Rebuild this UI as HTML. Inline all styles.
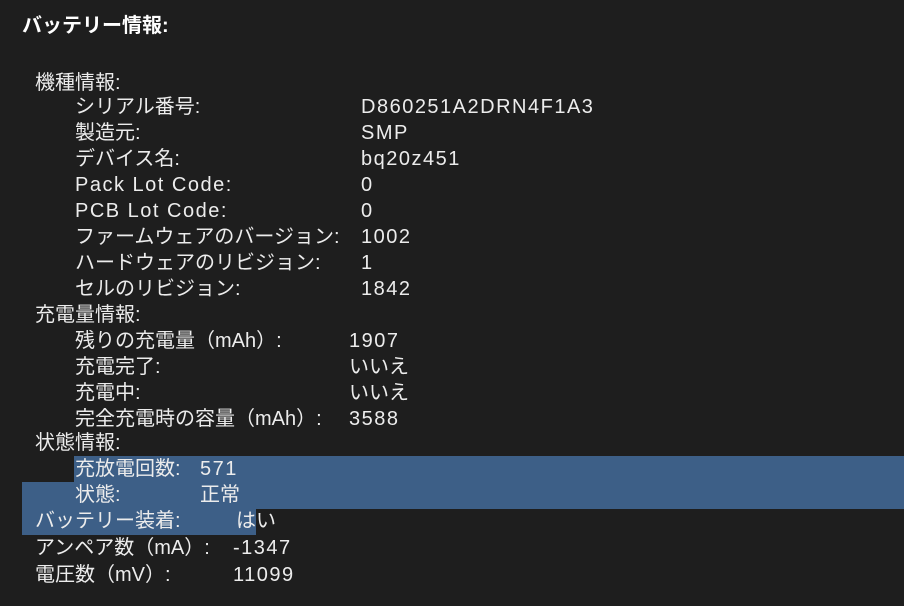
<!DOCTYPE html><html><head><meta charset="utf-8"><style>
body{margin:0;background:#1e1e1e;width:904px;height:606px;overflow:hidden;position:relative;font-family:"Liberation Sans","Noto Sans CJK JP",sans-serif;color:#ececec;font-size:20px}
.t{position:absolute;white-space:nowrap;line-height:26px}
.l{letter-spacing:1.5px}
.b{position:absolute;background:#3d5f87}
</style></head><body>
<div class="t" style="left:22px;top:13px;font-weight:bold;color:#fff">バッテリー情報:</div>
<div class="b" style="left:74px;top:456px;width:830px;height:27px"></div>
<div class="b" style="left:22px;top:482px;width:882px;height:27px"></div>
<div class="b" style="left:22px;top:508px;width:234px;height:27px"></div>
<div class="t" style="left:35px;top:70px">機種情報:</div>
<div class="t" style="left:75px;top:94px">シリアル番号:</div><div class="t l" style="left:361px;top:94px">D860251A2DRN4F1A3</div>
<div class="t" style="left:75px;top:120px">製造元:</div><div class="t l" style="left:361px;top:120px">SMP</div>
<div class="t" style="left:75px;top:146px">デバイス名:</div><div class="t l" style="left:361px;top:146px">bq20z451</div>
<div class="t l" style="left:75px;top:172px">Pack Lot Code:</div><div class="t l" style="left:361px;top:172px">0</div>
<div class="t l" style="left:75px;top:198px">PCB Lot Code:</div><div class="t l" style="left:361px;top:198px">0</div>
<div class="t" style="left:75px;top:224px">ファームウェアのバージョン:</div><div class="t l" style="left:361px;top:224px">1002</div>
<div class="t" style="left:75px;top:250px">ハードウェアのリビジョン:</div><div class="t l" style="left:361px;top:250px">1</div>
<div class="t" style="left:75px;top:276px">セルのリビジョン:</div><div class="t l" style="left:361px;top:276px">1842</div>
<div class="t" style="left:35px;top:302px">充電量情報:</div>
<div class="t" style="left:75px;top:328px">残りの充電量（mAh）:</div><div class="t l" style="left:349px;top:328px">1907</div>
<div class="t" style="left:75px;top:354px">充電完了:</div><div class="t" style="left:349px;top:354px">いいえ</div>
<div class="t" style="left:75px;top:380px">充電中:</div><div class="t" style="left:349px;top:380px">いいえ</div>
<div class="t" style="left:75px;top:406px">完全充電時の容量（mAh）:</div><div class="t l" style="left:349px;top:406px">3588</div>
<div class="t" style="left:35px;top:430px">状態情報:</div>
<div class="t" style="left:75px;top:456px">充放電回数:</div><div class="t l" style="left:200px;top:456px">571</div>
<div class="t" style="left:75px;top:482px">状態:</div><div class="t" style="left:200px;top:482px">正常</div>
<div class="t" style="left:35px;top:508px">バッテリー装着:</div><div class="t" style="left:236px;top:508px">はい</div>
<div class="t" style="left:35px;top:535px">アンペア数（mA）:</div><div class="t l" style="left:233px;top:535px">-1347</div>
<div class="t" style="left:35px;top:562px">電圧数（mV）:</div><div class="t l" style="left:233px;top:562px">11099</div>
</body></html>
